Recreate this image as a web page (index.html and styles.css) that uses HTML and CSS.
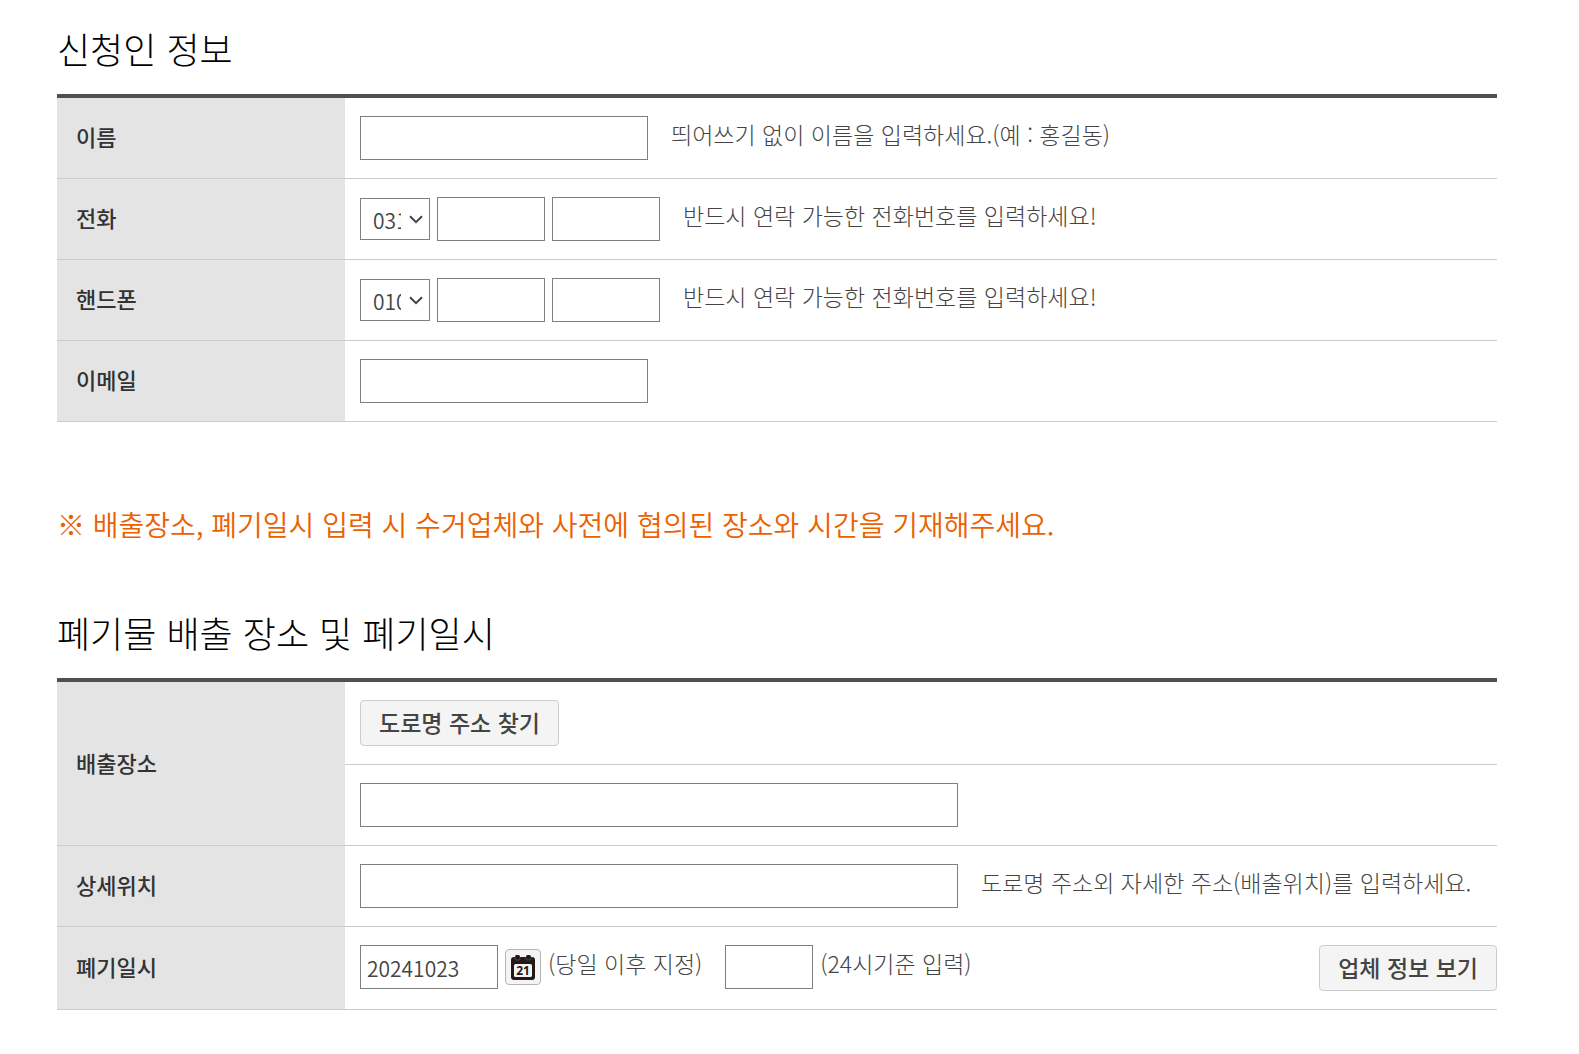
FILE: index.html
```html
<!DOCTYPE html>
<html lang="ko">
<head>
    <meta charset="UTF-8">
    <meta name="viewport" content="width=device-width, initial-scale=1.0">
    <title>대형폐기물 배출 신청</title>
    <link rel="stylesheet" href="styles.css">
</head>
<body>
    <form class="apply" action="#" method="post">
        <!-- APPLICANT -->
        <h2 class="apply__title">신청인 정보</h2>
        <table class="form">
            <tbody>
                <tr>
                    <th class="form__head" scope="row"><label for="name">이름</label></th>
                    <td class="form__cell">
                        <div class="field">
                            <input class="input input--name" type="text" id="name">
                            <span class="field__hint">띄어쓰기 없이 이름을 입력하세요.(예 : 홍길동)</span>
                        </div>
                    </td>
                </tr>
                <tr>
                    <th class="form__head" scope="row"><label for="tel1">전화</label></th>
                    <td class="form__cell">
                        <div class="field">
                            <div class="select">
                                <select class="select__box" id="tel1">
                                    <option>031</option>
                                    <option>02</option>
                                    <option>032</option>
                                </select>
                                <svg class="select__arrow" width="14" height="9" viewBox="0 0 14 9">
                                    <path d="M1 1.2l6 6 6-6"/>
                                </svg>
                            </div>
                            <input class="input input--tel" type="text" aria-label="전화 가운데 자리">
                            <input class="input input--tel" type="text" aria-label="전화 끝자리">
                            <span class="field__hint">반드시 연락 가능한 전화번호를 입력하세요!</span>
                        </div>
                    </td>
                </tr>
                <tr>
                    <th class="form__head" scope="row"><label for="hp1">핸드폰</label></th>
                    <td class="form__cell">
                        <div class="field">
                            <div class="select">
                                <select class="select__box" id="hp1">
                                    <option>010</option>
                                    <option>011</option>
                                    <option>016</option>
                                </select>
                                <svg class="select__arrow" width="14" height="9" viewBox="0 0 14 9">
                                    <path d="M1 1.2l6 6 6-6"/>
                                </svg>
                            </div>
                            <input class="input input--tel" type="text" aria-label="핸드폰 가운데 자리">
                            <input class="input input--tel" type="text" aria-label="핸드폰 끝자리">
                            <span class="field__hint">반드시 연락 가능한 전화번호를 입력하세요!</span>
                        </div>
                    </td>
                </tr>
                <tr>
                    <th class="form__head" scope="row"><label for="email">이메일</label></th>
                    <td class="form__cell">
                        <div class="field">
                            <input class="input input--name" type="text" id="email">
                        </div>
                    </td>
                </tr>
            </tbody>
        </table>

        <p class="apply__notice">※ 배출장소, 폐기일시 입력 시 수거업체와 사전에 협의된 장소와 시간을 기재해주세요.</p>

        <!-- PLACE AND DATE -->
        <h2 class="apply__title">폐기물 배출 장소 및 폐기일시</h2>
        <table class="form">
            <tbody>
                <tr>
                    <th class="form__head" scope="row" rowspan="2"><label for="addr">배출장소</label></th>
                    <td class="form__cell">
                        <div class="field">
                            <button class="btn" type="button">도로명 주소 찾기</button>
                        </div>
                    </td>
                </tr>
                <tr>
                    <td class="form__cell">
                        <div class="field">
                            <input class="input input--addr" type="text" id="addr">
                        </div>
                    </td>
                </tr>
                <tr>
                    <th class="form__head" scope="row"><label for="addr2">상세위치</label></th>
                    <td class="form__cell">
                        <div class="field">
                            <input class="input input--addr" type="text" id="addr2">
                            <span class="field__hint">도로명 주소외 자세한 주소(배출위치)를 입력하세요.</span>
                        </div>
                    </td>
                </tr>
                <tr>
                    <th class="form__head" scope="row"><label for="date">폐기일시</label></th>
                    <td class="form__cell">
                        <div class="field">
                            <input class="input input--date" type="text" id="date" value="20241023">
                            <button class="calendar" type="button" aria-label="날짜 선택">
                                <svg width="24" height="25" viewBox="0 0 24 25">
                                    <rect x="4" y="0" width="5" height="6" rx="1.5" fill="#231815"/>
                                    <rect x="15" y="0" width="5" height="6" rx="1.5" fill="#231815"/>
                                    <rect x="0" y="2" width="24" height="23" rx="3" fill="#231815"/>
                                    <path d="M4 2v2q0 1 1 1h3q1 0 1-1V2M15 2v2q0 1 1 1h3q1 0 1-1V2" fill="none" stroke="#6b6462" stroke-width=".6"/>
                                    <rect x="3" y="9" width="18" height="13" rx="1.5" fill="#f4f4f4"/>
                                    <text class="calendar__day" x="12" y="20" text-anchor="middle">21</text>
                                </svg>
                            </button>
                            <span class="field__unit">(당일 이후 지정)</span>
                            <input class="input input--hour" type="text" id="hour">
                            <label class="field__unit" for="hour">(24시기준 입력)</label>
                            <button class="btn btn--right" type="button">업체 정보 보기</button>
                        </div>
                    </td>
                </tr>
            </tbody>
        </table>
    </form>
</body>
</html>
```
FILE: styles.css
```css
@charset "UTF-8";
:root {
    --text-color: #444;
    --head-color: #333;
    --head-bg-color: #e4e4e4;
    --line-color: #ccc;
    --notice-color: #eb6100;
}

* {
    box-sizing: border-box;
}

body {
    margin: 0;
    background-color: white;
    color: var(--text-color);
    font-family: "Noto Sans CJK KR", sans-serif;
    font-size: 23px;
    font-weight: 300;
}

.apply {
    padding: 22px 82px 44px 57px;
}
.apply__title {
    margin: 0 0 20px;
    color: black;
    font-size: 36px;
    font-weight: 300;
    line-height: 52px;
}
.apply__notice {
    margin: 82px 0 62px;
    color: var(--notice-color);
    font-size: 28px;
    font-weight: 350;
    line-height: 40px;
}

.form {
    width: 100%;
    border-top: 4px solid #505050;
    border-spacing: 0;
}
.form__head {
    width: 20%;
    padding: 0 19px 4px;
    border-bottom: 1px solid var(--line-color);
    background-color: var(--head-bg-color);
    color: var(--head-color);
    font-size: 22px;
    font-weight: 500;
    text-align: left;
}
.form__cell {
    padding: 18px 0 18px 15px;
    border-bottom: 1px solid var(--line-color);
}

.field {
    display: flex;
    align-items: flex-start;
    gap: 7px;
}
.field__hint, .field__unit {
    line-height: 36px;
    white-space: nowrap;
}
.field__hint {
    margin-left: 16px;
}

.input, .select__box {
    border: 1px solid #7f7f7f;
    border-radius: 0;
    background-color: white;
    color: var(--text-color);
    font-family: inherit;
    font-size: 21px;
    font-weight: 350;
}
.input {
    height: 44px;
    padding: 2px 6px 0;
}
.input--name {
    width: 288px;
}
.input--tel {
    width: 108px;
}
.input--addr {
    width: 598px;
}
.input--date {
    width: 138px;
}
.input--hour {
    width: 88px;
    margin-left: 16px;
}

.select {
    position: relative;
    margin-top: 1px;
}
.select__box {
    display: block;
    width: 70px;
    height: 42px;
    padding: 2px 28px 0 12px;
    appearance: none;
    text-overflow: clip;
}
.select__arrow {
    position: absolute;
    top: 17px;
    right: 7px;
    fill: none;
    stroke: var(--text-color);
    stroke-width: 2;
    pointer-events: none;
}

.btn {
    height: 46px;
    padding: 0 18px 2px;
    border: 1px solid var(--line-color);
    border-radius: 4px;
    background-color: #f4f4f4;
    color: var(--text-color);
    font-family: inherit;
    font-size: 23px;
    font-weight: 500;
    line-height: 40px;
    white-space: nowrap;
    cursor: pointer;
}
.btn--right {
    margin-left: auto;
}

.calendar {
    display: flex;
    align-items: center;
    justify-content: center;
    width: 36px;
    height: 36px;
    margin-top: 4px;
    padding: 0;
    border: 1px solid #b5b5b5;
    border-radius: 4px;
    background-color: #f4f4f4;
    cursor: pointer;
}
.calendar__day {
    fill: #231815;
    font-family: "Open Sans", sans-serif;
    font-size: 12px;
    font-weight: 700;
}
```
